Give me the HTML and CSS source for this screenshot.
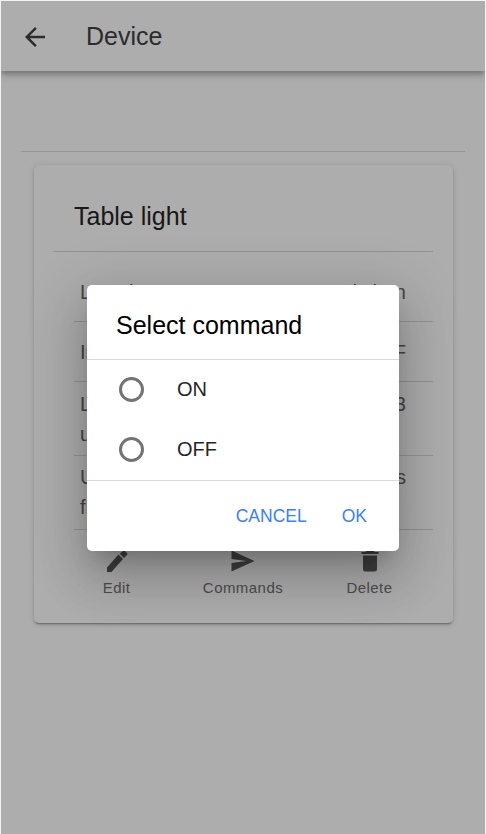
FILE: index.html
```html
<!DOCTYPE html>
<html lang="en">
<head>
<meta charset="utf-8">
<title>Device</title>
<link rel="stylesheet" href="styles.css">
</head>
<body>
<div class="app">
  <header class="toolbar">
    <svg class="back" viewBox="0 0 24 24"><path d="M20 11H7.83l5.59-5.59L12 4l-8 8 8 8 1.41-1.41L7.83 13H20v-2z"/></svg>
    <h1>Device</h1>
  </header>
  <main class="content">
    <section class="card">
      <h2>Table light</h2>
      <div class="list">
        <div class="item first"><span class="name">Location</span><span>Kitchen</span></div>
        <div class="item"><span class="name">Initial state</span><span>OFF</span></div>
        <div class="item tall"><span class="name">Last<br>update</span><span>12:43</span></div>
        <div class="item tall last"><span class="name">Update<br>frequency</span><span>30 s</span></div>
      </div>
      <nav class="actions">
        <div class="action"><svg viewBox="0 0 28 28"><path d="M4 21.500V26h4.500L20 13l-4.500-4.500zM21 12l3.200-3.300a1 1 0 0 0 0-1.400l-2.500-2.500a1 1 0 0 0-1.400 0L16.700 7.700z"/></svg><span>Edit</span></div>
        <div class="action"><svg viewBox="0 0 28 28"><path d="M2.500 25.500 25.500 15 2.500 4.500V13l15 2-15 2z"/></svg><span>Commands</span></div>
        <div class="action"><svg viewBox="0 0 28 28"><path d="M7 9.500h14V23a2.500 2.500 0 0 1-2.500 2.500h-9A2.500 2.500 0 0 1 7 23zM5.500 6h4l1-2h7l1 2h4v2h-17z"/></svg><span>Delete</span></div>
      </nav>
    </section>
  </main>
  <div class="backdrop">
    <div class="alert" role="dialog">
      <h3>Select command</h3>
      <div class="options">
        <div class="option"><i class="radio"></i><span>ON</span></div>
        <div class="option"><i class="radio"></i><span>OFF</span></div>
      </div>
      <div class="buttons"><button>CANCEL</button><button>OK</button></div>
    </div>
  </div>
</div>
</body>
</html>
```
FILE: styles.css
```css
* { box-sizing: border-box; }
body { margin: 0; background: #f2f4f3; font-family: "Liberation Sans", Arial, sans-serif; }
h1, h2, h3 { margin: 0; font-weight: 400; }
svg { display: block; fill: currentColor; }
.app { position: relative; width: 484px; height: 833px; margin: 1px 1px 0; background: #fff; overflow: hidden; }
.toolbar { position: relative; display: flex; align-items: center; height: 70px; padding-left: 19px; color: #424242;
  box-shadow: 0 2.5px 5px -1px rgba(0,0,0,.2), 0 5px 6px rgba(0,0,0,.14), 0 1px 12px rgba(0,0,0,.12); }
.toolbar h1 { margin-left: 36px; font-size: 25px; line-height: 30px; }
.back { width: 30px; height: 30px; margin-top: 2px; }
.content { margin: 80px 20px 0; padding: 13px 12px 0 13px; border-top: 1px solid #dedede; }
.card { height: 458px; padding: 20px 20px 0 19px; border-radius: 5px; background: #fff;
  box-shadow: 0 3px 1px -2.5px rgba(0,0,0,.2), 0 1.5px 2.5px rgba(0,0,0,.14), 0 1px 6px rgba(0,0,0,.12); }
.card h2 { height: 67px; padding-left: 21px; border-bottom: 1px solid #dadada; font-size: 25px; line-height: 62px; color: #262626; }
.list { margin-left: 21px; }
.item { display: flex; justify-content: space-between; height: 60px; padding: 15px 27px 0 6px; border-bottom: 1px solid #dadada; font-size: 20px; line-height: 30px; color: #666; }
.item.first { height: 70px; padding-top: 25px; }
.item.tall { height: 74px; padding-top: 7px; }
.item.last { padding-top: 6px; }
.actions { display: grid; grid-template-columns: 85px 168px 85px; padding: 16px 0 0 21px; }
.action { display: flex; flex-direction: column; align-items: center; font-size: 15px; line-height: 20px; letter-spacing: .45px; color: #737373; }
.action svg { width: 28px; height: 28px; color: #5c5c5c; }
.action span { margin-top: 4px; }
.backdrop { position: absolute; inset: 0; display: flex; align-items: center; justify-content: center; background: rgba(0,0,0,.32); }
.alert { width: 312px; height: 266px; border-radius: 5px; background: #fff;
  box-shadow: 0 14px 19px -9px rgba(0,0,0,.2), 0 30px 48px 4px rgba(0,0,0,.14), 0 11px 58px 10px rgba(0,0,0,.12); }
.alert h3 { height: 74px; padding: 25px 29px 0; font-size: 25px; line-height: 30px; color: #000; }
.options { height: 122px; border-top: 1px solid #d9d9d9; border-bottom: 1px solid #d9d9d9; }
.option { display: flex; align-items: center; height: 60px; padding-left: 32px; font-size: 20px; color: #262626; }
.radio { width: 25px; height: 25px; margin-right: 33px; border: 3px solid #737373; border-radius: 50%; }
.buttons { display: flex; justify-content: flex-end; gap: 35px; padding: 25px 32px 0; }
.buttons button { padding: 0; border: 0; background: none; font: 17.5px/20px "Liberation Sans", Arial, sans-serif; color: #3880ff; }
```
